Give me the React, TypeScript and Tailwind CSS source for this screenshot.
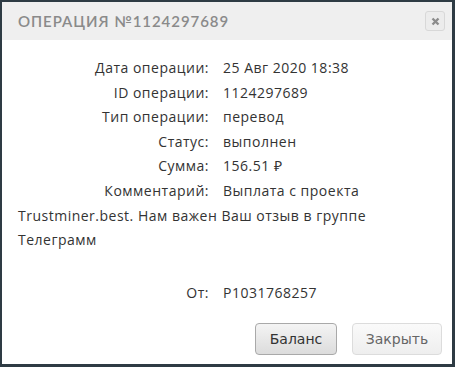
import React from "react";

const rows: [string, React.ReactNode][] = [
  ["Дата операции:", "25 Авг 2020 18:38"],
  ["ID операции:", "1124297689"],
  ["Тип операции:", "перевод"],
  ["Статус:", "выполнен"],
  ["Сумма:", "156.51 ₽"],
];

const lbl = "inline-block w-[205px] text-right pr-[14px]";

export default function App() {
  return (
    <div className="w-[455px] h-[367px] bg-[#2e3b44] pl-[2px] pt-[2px] pr-[3px] pb-[3px]">
      <div className="w-full h-full bg-white flex flex-col">
        <div className="h-[38px] bg-[#efefef] flex items-center justify-between pl-[16px] pr-[7px] shrink-0">
          <div
            className="text-[15px] tracking-[0.95px] text-[#8a8a8a] font-semibold uppercase"
            style={{ fontFamily: '"Lato", "DejaVu Sans", sans-serif' }}
          >
            Операция №1124297689
          </div>
          <div className="w-[20px] h-[20px] border border-[#d8d8d8] rounded-[3px] bg-[#ececec] flex items-center justify-center">
            <svg width="9" height="9" viewBox="0 0 9 9">
              <path d="M1.5 1.5 L7.5 7.5 M7.5 1.5 L1.5 7.5" stroke="#8c8c8c" strokeWidth="2.4" strokeLinecap="butt" />
            </svg>
          </div>
        </div>
        <div
          className="flex-1 px-[16px] pt-[16px] text-[14px] tracking-[0.5px] leading-[24.6px] text-[#333]"
          style={{ fontFamily: '"Open Sans", "Lato", sans-serif' }}
        >
          {rows.map(([l, v]) => (
            <div key={l}>
              <span className={lbl}>{l}</span>
              {v}
            </div>
          ))}
          <div>
            <span className={lbl}>Комментарий:</span>
            Выплата с проекта Trustminer.best. Нам важен Ваш отзыв в группе Телеграмм
          </div>
          <div className="mt-[28px]">
            <span className={lbl}>От:</span>
            P1031768257
          </div>
        </div>
        <div
          className="flex justify-end gap-[15px] pr-[10px] pb-[9px] text-[14px]"
          style={{ fontFamily: '"DejaVu Sans", sans-serif' }}
        >
          <button className="w-[82px] h-[32px] rounded-[4px] border border-[#a9a9a9] bg-gradient-to-b from-[#f4f4f4] to-[#dcdcdc] text-[#333]">
            Баланс
          </button>
          <button className="w-[90px] h-[32px] rounded-[4px] border border-[#dcdcdc] bg-gradient-to-b from-[#fafafa] to-[#eeeeee] text-[#666]">
            Закрыть
          </button>
        </div>
      </div>
    </div>
  );
}
